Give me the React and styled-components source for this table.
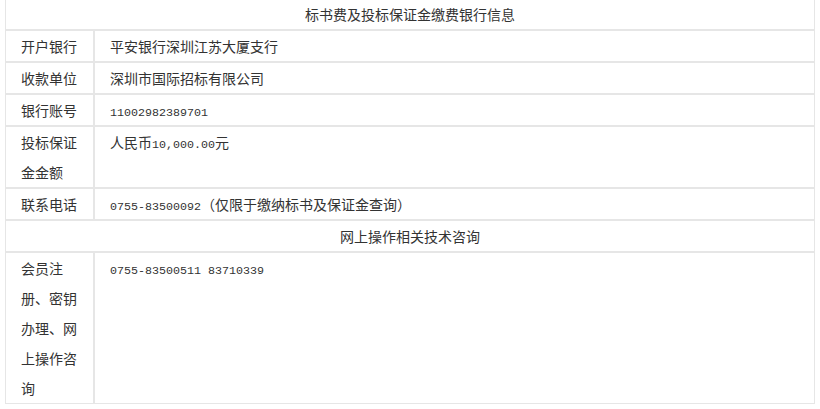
import React from "react";
import styled, { createGlobalStyle } from "styled-components";

const Global = createGlobalStyle`
  html, body { margin: 0; padding: 0; background: #fff; }
  body {
    font-family: "Noto Sans CJK SC", "Liberation Sans", sans-serif;
    color: #333;
  }
`;

const Wrap = styled.div`
  padding: 0 5px;
`;

const InfoTable = styled.div`
  display: grid;
  grid-template-columns: 89px 1fr;
  font-family: "Noto Sans CJK SC", "Liberation Sans", sans-serif;
  font-size: 14px;
  line-height: 30px;
  color: #333;
`;

const Cell = styled.div`
  box-sizing: border-box;
  border: 1px solid #e6e6e6;
  padding: 0 15px;
  min-width: 0;
`;

const HeadCell = styled(Cell)`
  grid-column: 1 / -1;
  text-align: center;
  padding: 0;
  border-top: ${(p) => (p.$first ? "none" : "1px solid #e6e6e6")};
  line-height: ${(p) => (p.$first ? "29px" : "30px")};
`;

const LabelCell = styled(Cell)`
  line-break: strict;
`;

const ValueCell = styled(Cell)``;

const Num = styled.span`
  font-family: "Liberation Mono", monospace;
  font-size: 11.67px;
  line-height: 0;
`;

const rows1 = [
  { label: "开户银行", value: "平安银行深圳江苏大厦支行" },
  { label: "收款单位", value: "深圳市国际招标有限公司" },
  { label: "银行账号", value: <Num>11002982389701</Num> },
  {
    label: "投标保证金金额",
    value: (
      <>
        人民币<Num>10,000.00</Num>元
      </>
    ),
  },
  {
    label: "联系电话",
    value: (
      <>
        <Num>0755-83500092</Num>（仅限于缴纳标书及保证金查询）
      </>
    ),
  },
];

export default function App() {
  return (
    <Wrap>
      <Global />
      <InfoTable>
        <HeadCell $first>标书费及投标保证金缴费银行信息</HeadCell>
        {rows1.map((r) => (
          <React.Fragment key={r.label}>
            <LabelCell>{r.label}</LabelCell>
            <ValueCell>{r.value}</ValueCell>
          </React.Fragment>
        ))}
        <HeadCell>网上操作相关技术咨询</HeadCell>
        <LabelCell>会员注册、密钥办理、网上操作咨询</LabelCell>
        <ValueCell>
          <Num>0755-83500511 83710339</Num>
        </ValueCell>
      </InfoTable>
    </Wrap>
  );
}
